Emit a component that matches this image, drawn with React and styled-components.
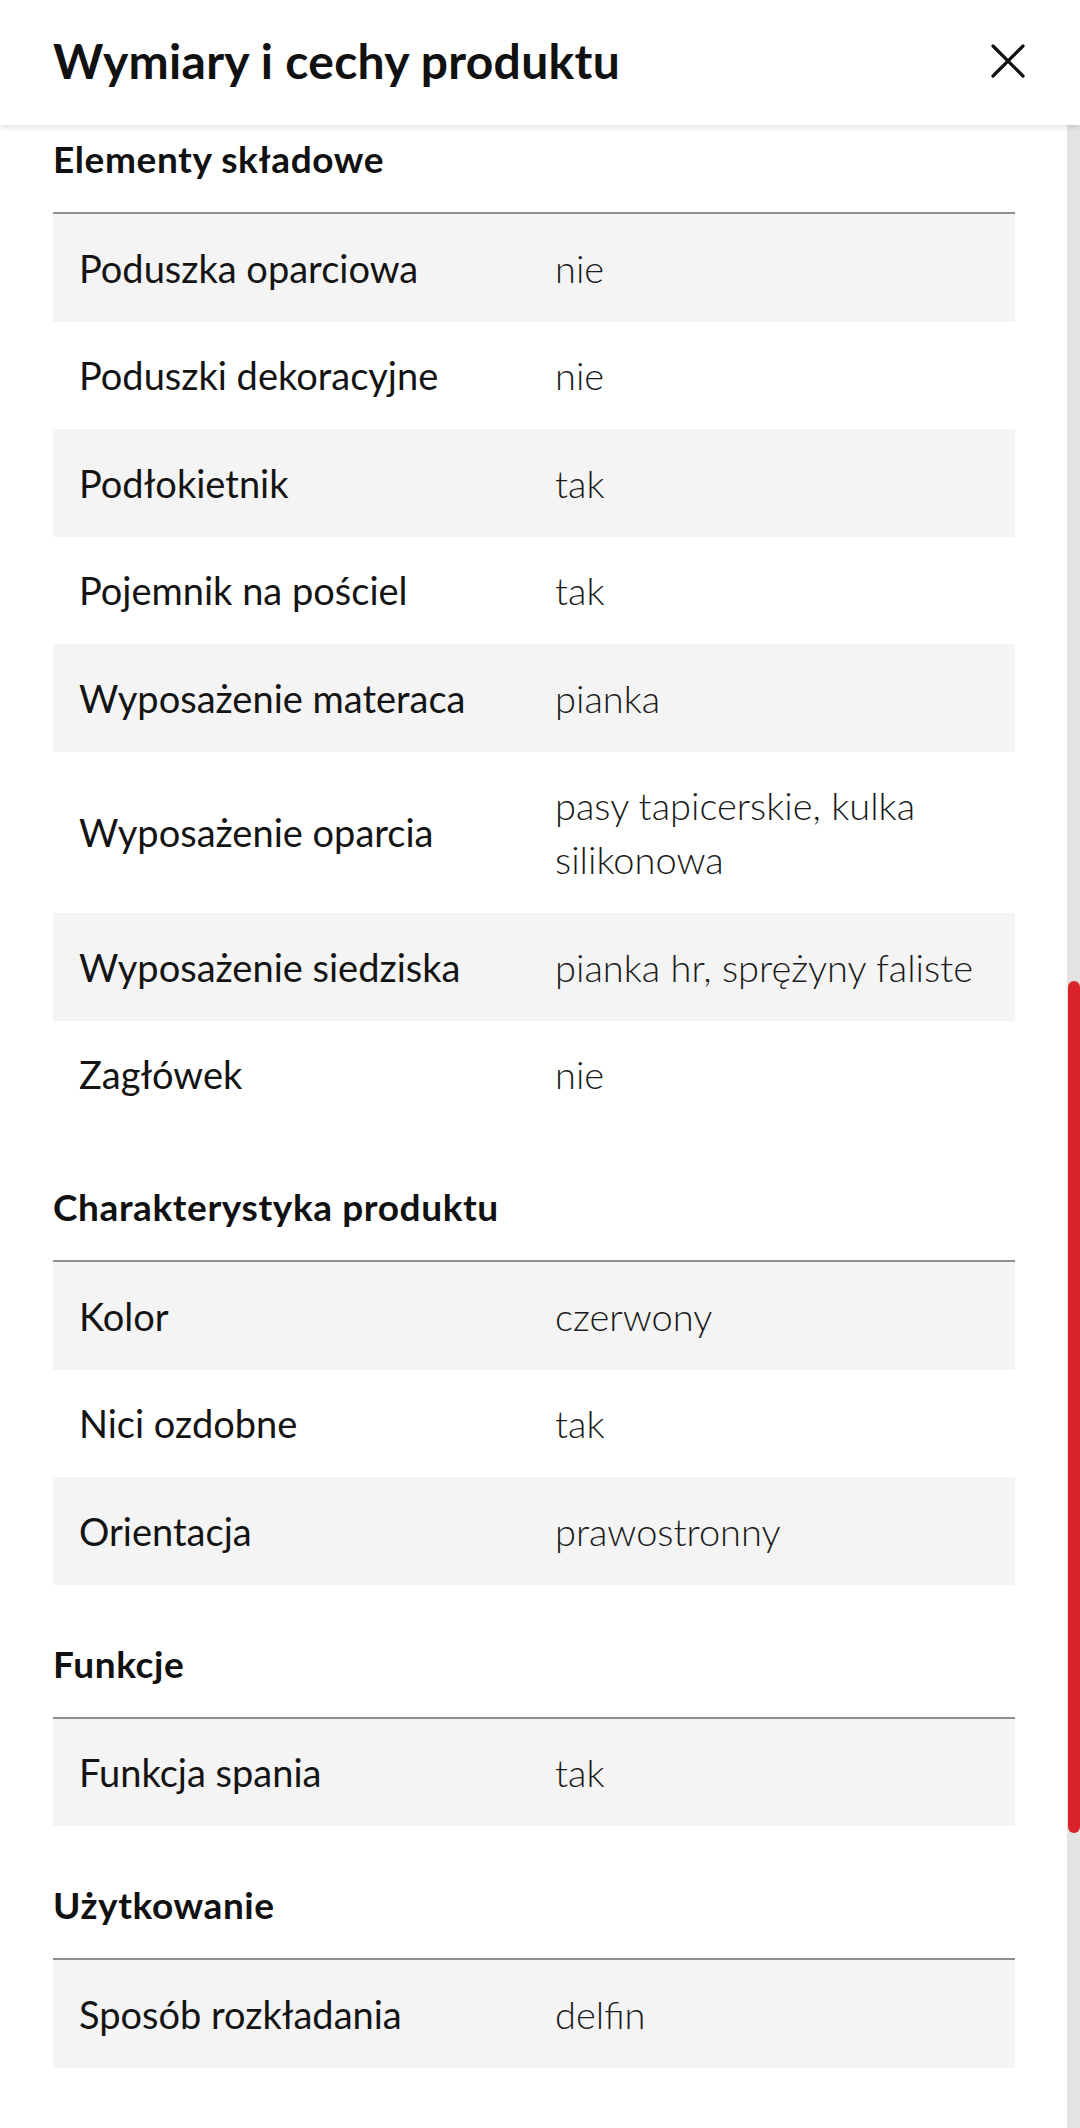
import React from "react";
import styled, { createGlobalStyle } from "styled-components";

const Global = createGlobalStyle`
  html, body { margin: 0; padding: 0; background: #fff; }
  body { font-family: Lato, "Open Sans", "Noto Sans", sans-serif; color: #141414; }
  * { box-sizing: border-box; }
`;

const Page = styled.div`
  width: 1080px;
  height: 2128px;
  display: flex;
  flex-direction: column;
  overflow: hidden;
  background: #fff;
`;

const Header = styled.header`
  height: 125px;
  flex: 0 0 125px;
  display: flex;
  align-items: center;
  justify-content: space-between;
  padding: 0 55px 0 53px;
  background: #fff;
  box-shadow: 0 2px 6px rgba(0, 0, 0, 0.13);
  position: relative;
  z-index: 2;
`;

const Title = styled.h1`
  margin: 0;
  font-size: 48px;
  font-weight: 700;
  letter-spacing: 0.3px;
  color: #111;
  margin-top: -4px;
`;

const CloseButton = styled.button`
  width: 34px;
  height: 34px;
  padding: 0;
  border: 0;
  background: none;
  display: flex;
  align-items: center;
  justify-content: center;
  margin-top: -3px;
`;

const Body = styled.div`
  flex: 1;
  display: flex;
  min-height: 0;
`;

const Content = styled.main`
  flex: 1;
  display: flex;
  flex-direction: column;
  gap: 52px;
  padding: 7px 52px 0 53px;
`;

const Section = styled.section`
  display: flex;
  flex-direction: column;
`;

const SectionTitle = styled.h2`
  margin: 0 0 26px;
  font-size: 37px;
  line-height: 54px;
  font-weight: 700;
  letter-spacing: 0.6px;
  color: #111;
`;

const Table = styled.div`
  border-top: 2px solid #8e8e8e;
  display: flex;
  flex-direction: column;
`;

const Row = styled.div`
  display: grid;
  grid-template-columns: 476px 1fr;
  background: ${(p) => (p.$shaded ? "#f4f4f4" : "#fff")};
  font-size: 38px;
  line-height: 54px;
  padding: 26.75px 0;
  align-items: center;
`;

const Label = styled.div`
  padding: 0 26px;
  font-weight: 400;
  color: #141414;
`;

const Value = styled.div`
  padding: 0 26px;
  font-weight: 300;
  color: #1a1a1a;
`;

const Track = styled.div`
  width: 13px;
  flex: 0 0 13px;
  background: #e3e3e3;
  position: relative;
`;

const Thumb = styled.div`
  position: absolute;
  left: 1px;
  right: 0;
  top: 856px;
  height: 852px;
  border-radius: 7px;
  background: #d8232b;
`;

const sections = [
  {
    title: "Elementy składowe",
    rows: [
      ["Poduszka oparciowa", "nie"],
      ["Poduszki dekoracyjne", "nie"],
      ["Podłokietnik", "tak"],
      ["Pojemnik na pościel", "tak"],
      ["Wyposażenie materaca", "pianka"],
      ["Wyposażenie oparcia", "pasy tapicerskie, kulka silikonowa"],
      ["Wyposażenie siedziska", "pianka hr, sprężyny faliste"],
      ["Zagłówek", "nie"],
    ],
  },
  {
    title: "Charakterystyka produktu",
    rows: [
      ["Kolor", "czerwony"],
      ["Nici ozdobne", "tak"],
      ["Orientacja", "prawostronny"],
    ],
  },
  {
    title: "Funkcje",
    rows: [["Funkcja spania", "tak"]],
  },
  {
    title: "Użytkowanie",
    rows: [["Sposób rozkładania", "delfin"]],
  },
];

export default function App() {
  return (
    <Page>
      <Global />
      <Header>
        <Title>Wymiary i cechy produktu</Title>
        <CloseButton aria-label="Zamknij">
          <svg width="34" height="34" viewBox="0 0 34 34" fill="none">
            <path d="M2 2 L32 32 M32 2 L2 32" stroke="#111" strokeWidth="3.2" strokeLinecap="round" />
          </svg>
        </CloseButton>
      </Header>
      <Body>
        <Content>
          {sections.map((s) => (
            <Section key={s.title}>
              <SectionTitle>{s.title}</SectionTitle>
              <Table>
                {s.rows.map(([l, v], i) => (
                  <Row key={l} $shaded={i % 2 === 0}>
                    <Label>{l}</Label>
                    <Value>{v}</Value>
                  </Row>
                ))}
              </Table>
            </Section>
          ))}
        </Content>
        <Track>
          <Thumb />
        </Track>
      </Body>
    </Page>
  );
}
